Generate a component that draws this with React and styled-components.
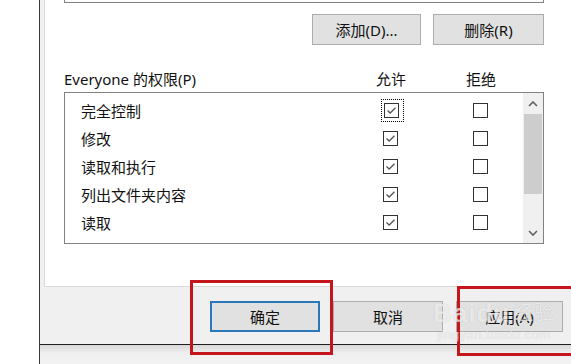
import React from "react";
import styled, { createGlobalStyle } from "styled-components";

const Global = createGlobalStyle`
  html, body { margin: 0; padding: 0; background: #fff; }
  body { width: 571px; height: 364px; overflow: hidden; font-family: "Noto Sans", "Noto Sans CJK SC", sans-serif; }
  #root { width: 571px; height: 364px; }
`;

const Page = styled.div`
  position: relative;
  display: flex;
  width: 571px;
  height: 364px;
  background: #fff;
  overflow: hidden;
`;

const LeftMargin = styled.div`
  width: 39px;
  flex: none;
  background: #fff;
`;

const Dialog = styled.div`
  flex: 1;
  display: flex;
  flex-direction: column;
  border-left: 1px solid #3c3c3c;
  background: #f0f0f0;
  padding-left: 4px;
  min-width: 0;
`;

const TabPage = styled.div`
  width: 513px;
  height: 286px;
  flex: none;
  background: #fff;
  border: 1px solid #d9d9d9;
  border-top: none;
  padding-left: 19px;
  box-sizing: content-box;
  display: flex;
  flex-direction: column;
`;

const GroupListStub = styled.div`
  width: 478px;
  height: 2px;
  border: 1px solid #828282;
  border-top: none;
`;

const ButtonRow = styled.div`
  display: flex;
  justify-content: flex-end;
  gap: 12px;
  width: 480px;
  margin-top: 11px;
`;

const Button = styled.div`
  box-sizing: border-box;
  width: ${(p) => p.$w || 110}px;
  height: 31px;
  display: flex;
  align-items: center;
  justify-content: center;
  background: #e1e1e1;
  border: ${(p) => (p.$default ? "2px solid #2b78b8" : "1px solid #adadad")};
  color: #111;
  font-size: 15px;
  font-family: "Noto Sans", "Noto Sans CJK SC", sans-serif;
`;

const HeaderRow = styled.div`
  display: flex;
  align-items: center;
  width: 480px;
  margin-top: 22px;
  height: 22px;
  font-size: 15px;
  color: #111;
`;

const HeaderLabel = styled.div`
  flex: 1;
`;

const ColHead = styled.div`
  width: ${(p) => p.$w}px;
  text-align: center;
  margin-right: ${(p) => p.$mr || 0}px;
`;

const ListBox = styled.div`
  margin-top: 3px;
  width: 478px;
  height: 150px;
  border: 1px solid #828282;
  display: flex;
  overflow: hidden;
`;

const Rows = styled.div`
  flex: 1;
  padding-top: 3px;
  display: flex;
  flex-direction: column;
  overflow: hidden;
`;

const Row = styled.div`
  display: flex;
  align-items: center;
  height: 28px;
  flex: none;
  font-size: 15px;
  color: #111;
`;

const RowLabel = styled.div`
  flex: 1;
  padding-left: 16px;
`;

const Cell = styled.div`
  width: 30px;
  display: flex;
  justify-content: center;
  margin-right: ${(p) => p.$mr || 0}px;
`;

const Focus = styled.div`
  width: 23px;
  height: 23px;
  box-sizing: border-box;
  border: 1px dotted #000;
  display: flex;
  align-items: center;
  justify-content: flex-start;
  padding-left: 2px;
  margin-left: 4px;
`;

const Box = styled.div`
  width: 15px;
  height: 15px;
  box-sizing: border-box;
  border: 1px solid #333;
  background: #fff;
  display: flex;
  align-items: center;
  justify-content: center;
`;

const Scrollbar = styled.div`
  width: 20px;
  flex: none;
  background: #f0f0f0;
  display: flex;
  flex-direction: column;
  align-items: stretch;
`;

const Arrow = styled.div`
  height: 21px;
  display: flex;
  align-items: center;
  justify-content: center;
`;

const Track = styled.div`
  flex: 1;
  display: flex;
  flex-direction: column;
`;

const Thumb = styled.div`
  height: 80px;
  background: #cdcdcd;
  margin-left: 1px;
  margin-right: 1px;
`;

const Footer = styled.div`
  height: 57px;
  flex: none;
  display: flex;
  gap: 13px;
  padding-left: 166px;
  padding-top: 14px;
  box-sizing: border-box;
`;

const BottomBar = styled.div`
  flex: 1;
  border-top: 1px solid #1e1e1e;
  background: linear-gradient(#d8d8d8, #efefef 8px, #f3f3f3);
  margin-left: -4px;
`;

const Annotation = styled.div`
  position: absolute;
  left: ${(p) => p.$x}px;
  top: ${(p) => p.$y}px;
  width: ${(p) => p.$w}px;
  height: ${(p) => p.$h}px;
  border: 3px solid #c4161c;
  box-sizing: border-box;
  pointer-events: none;
`;

const Watermark = styled.div`
  position: absolute;
  left: 433px;
  top: 298px;
  display: flex;
  flex-direction: column;
  align-items: center;
  color: rgba(255, 255, 255, 0.7);
  text-shadow: 0 0 1px rgba(0, 0, 0, 0.2);
  pointer-events: none;
  font-family: "Liberation Sans", "Noto Sans CJK SC", sans-serif;
`;

const WmTop = styled.div`
  font-size: 26px;
  font-weight: bold;
  letter-spacing: 1px;
  line-height: 30px;
  display: flex;
  align-items: center;
`;

const WmSmall = styled.span`
  font-size: 20px;
  font-weight: normal;
  margin-left: 3px;
`;

const WmBottom = styled.div`
  font-size: 13px;
  line-height: 14px;
  letter-spacing: 0.5px;
`;

const Check = () => (
  <svg width="11" height="9" viewBox="0 0 11 9">
    <path d="M1.5 4.5 L4.2 7 L9.5 1.8" fill="none" stroke="#555" strokeWidth="1.3" />
  </svg>
);

const Chevron = ({ up }) => (
  <svg width="10" height="6" viewBox="0 0 10 6">
    <path
      d={up ? "M1 5 L5 1 L9 5" : "M1 1 L5 5 L9 1"}
      fill="none"
      stroke="#606060"
      strokeWidth="1.6"
    />
  </svg>
);

const perms = [
  { name: "完全控制", focus: true },
  { name: "修改" },
  { name: "读取和执行" },
  { name: "列出文件夹内容" },
  { name: "读取" },
  { name: "" },
];

export default function App() {
  return (
    <>
      <Global />
      <Page>
        <LeftMargin />
        <Dialog>
          <TabPage>
            <GroupListStub />
            <ButtonRow>
              <Button $w={109}>添加(D)...</Button>
              <Button $w={111}>删除(R)</Button>
            </ButtonRow>
            <HeaderRow>
              <HeaderLabel>Everyone 的权限(P)</HeaderLabel>
              <ColHead $w={30} $mr={60}>允许</ColHead>
              <ColHead $w={30} $mr={48}>拒绝</ColHead>
            </HeaderRow>
            <ListBox>
              <Rows>
                {perms.map((p, i) => (
                  <Row key={i}>
                    <RowLabel>{p.name}</RowLabel>
                    <Cell $mr={60}>
                      {p.focus ? (
                        <Focus>
                          <Box>
                            <Check />
                          </Box>
                        </Focus>
                      ) : (
                        <Box>
                          <Check />
                        </Box>
                      )}
                    </Cell>
                    <Cell $mr={28}>
                      <Box />
                    </Cell>
                  </Row>
                ))}
              </Rows>
              <Scrollbar>
                <Arrow>
                  <Chevron up />
                </Arrow>
                <Track>
                  <Thumb />
                </Track>
                <Arrow>
                  <Chevron />
                </Arrow>
              </Scrollbar>
            </ListBox>
          </TabPage>
          <Footer>
            <Button $default>确定</Button>
            <Button>取消</Button>
            <Button $w={107}>应用(A)</Button>
          </Footer>
          <BottomBar />
        </Dialog>
        <Annotation $x={190} $y={280} $w={143} $h={75} />
        <Annotation $x={457} $y={286} $w={120} $h={70} />
        <Watermark>
          <WmTop>
            Bai<span>du</span>
            <WmSmall>经验</WmSmall>
          </WmTop>
          <WmBottom>jingyan.baidu.com</WmBottom>
        </Watermark>
      </Page>
    </>
  );
}
